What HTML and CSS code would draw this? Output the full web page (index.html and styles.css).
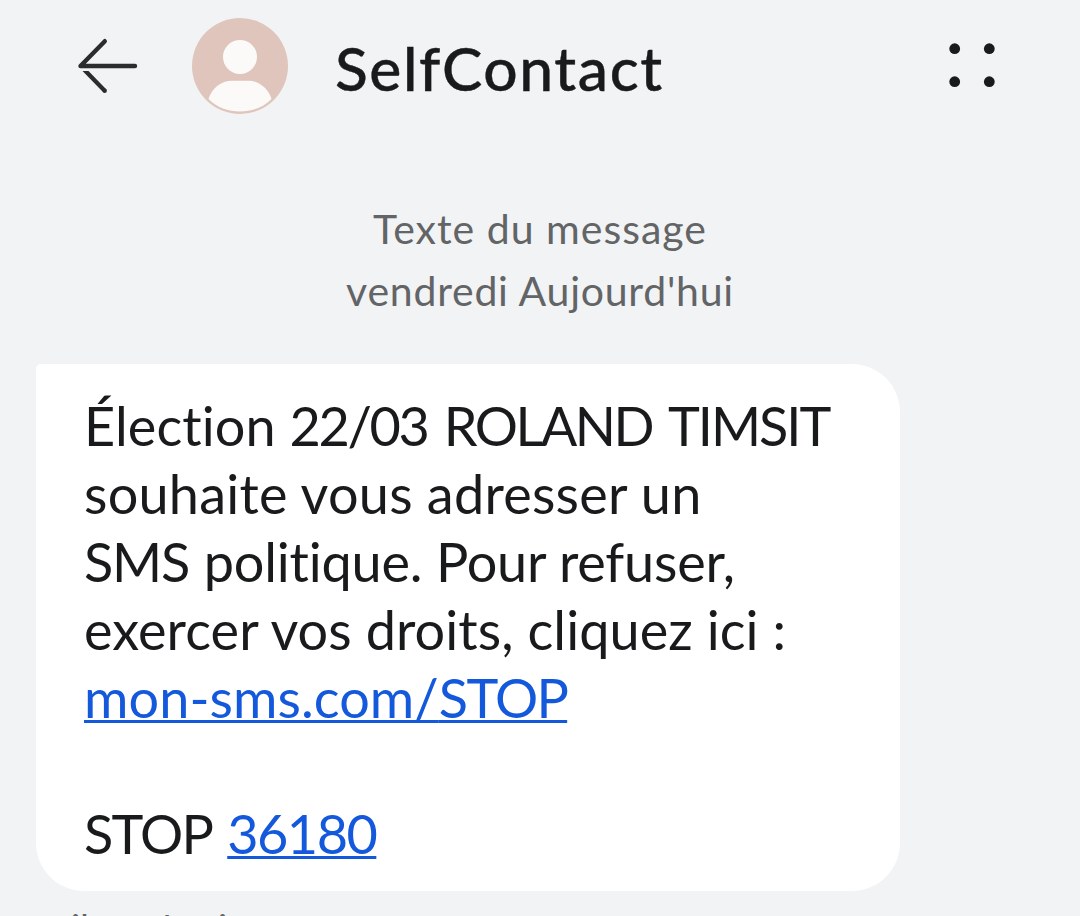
FILE: index.html
```html
<!DOCTYPE html>
<html lang="fr">
<head>
<meta charset="utf-8">
<title>SelfContact</title>
<link rel="stylesheet" href="styles.css">
</head>
<body>
<div class="screen">
  <header class="topbar">
    <svg class="back" viewBox="0 0 64 60" width="64" height="60" fill="none" stroke="#2b2c2d" stroke-width="4.4" stroke-linecap="round" stroke-linejoin="round"><path d="M60 30H5.500L29.800 5.200"/><path d="M7.500 35H13.500L31.200 53.200L28.200 56.300Z" fill="#2b2c2d" stroke="none"/><circle cx="29.700" cy="54.700" r="2.200" fill="#2b2c2d" stroke="none"/></svg>
    <svg class="avatar" viewBox="0 0 96 96" width="96" height="96"><circle cx="48" cy="48" r="48" fill="#e0c5bd"/><circle cx="48" cy="39" r="17" fill="#fcfaf8"/><path d="M16.500 81C20 70 29 62.700 40 62.700H56C67 62.700 76 70 79.500 81C71 89.500 60 93.500 48 93.500S25 89.500 16.500 81Z" fill="#fcfaf8"/></svg>
    <h1 class="name">SelfContact</h1>
    <svg class="menu" viewBox="0 0 48 48" width="48" height="48" fill="#191a1b"><circle cx="6.700" cy="6.700" r="5.400"/><circle cx="41.300" cy="6.700" r="5.400"/><circle cx="6.700" cy="39.700" r="5.400"/><circle cx="41.300" cy="39.700" r="5.400"/></svg>
  </header>
  <div class="stamp"><span class="kind">Texte du message</span><span class="day">vendredi Aujourd'hui</span></div>
  <main class="bubble">
    <p class="line">Élection <span class="digits date">22/03</span> <span class="caps surname">ROLAND</span> <span class="caps">TIMSIT</span></p>
    <p class="line loose">souhaite vous adresser un</p>
    <p class="line tight"><span class="sms">SMS</span> politique. Pour refuser,</p>
    <p class="line">exercer vos droits, cliquez ici :</p>
    <p class="line"><a class="link">mon-sms.com/<span class="stop">STOP</span></a></p>
    <p class="line"></p>
    <p class="line"><span class="stop">STOP</span> <a class="link digits phone">36180</a></p>
  </main>
  <footer class="time">il y a 1 min</footer>
</div>
</body>
</html>
```
FILE: styles.css
```css
* { box-sizing: border-box; margin: 0; padding: 0; }
body { width: 1080px; height: 916px; overflow: hidden; background: #f1f3f5; color: #191a1b; font-family: Lato, "Open Sans", sans-serif; font-variant-ligatures: none; }
.screen { height: 916px; overflow: hidden; display: flex; flex-direction: column; }
.topbar { height: 132px; flex: none; display: flex; align-items: center; padding: 0 84px 0 75px; }
.back { margin-right: 53px; }
.avatar { margin-right: 47px; }
.name { flex: 1; font-size: 60.5px; line-height: 72px; font-weight: 500; letter-spacing: 1.6px; white-space: nowrap; padding-top: 4px; -webkit-text-stroke: 0.4px #191a1b; }
.menu { flex: none; }
.stamp { height: 232px; flex: none; padding-top: 66px; display: flex; flex-direction: column; align-items: center; color: #626466; font-size: 41px; line-height: 62px; }
.kind { letter-spacing: 1px; }
.day { letter-spacing: 0.75px; }
.bubble { width: 864px; height: 527px; flex: none; margin-left: 36px; padding: 28px 0 0 48px; background: #fff; border-radius: 5px 48px 48px 48px; }
.line { height: 68px; font-size: 54px; line-height: 68px; letter-spacing: 0.08px; white-space: nowrap; }
.loose { letter-spacing: 0.25px; }
.tight { letter-spacing: -0.2px; }
.sms { letter-spacing: -1.2px; margin-right: 1px; }
.digits { letter-spacing: -1.5px; }
.date { letter-spacing: -2.4px; margin-right: 2.5px; }
.caps { letter-spacing: -2px; }
.surname { letter-spacing: -2.5px; margin-right: 2px; }
.stop { letter-spacing: -1.7px; }
.link { color: #1459dc; text-decoration: underline; text-decoration-thickness: 3px; text-underline-offset: 2px; text-decoration-skip-ink: none; }
.phone { margin-left: 1px; }
.time { margin: 15px 0 0 71px; font-size: 38px; line-height: 44px; color: #626466; white-space: nowrap; }
```
